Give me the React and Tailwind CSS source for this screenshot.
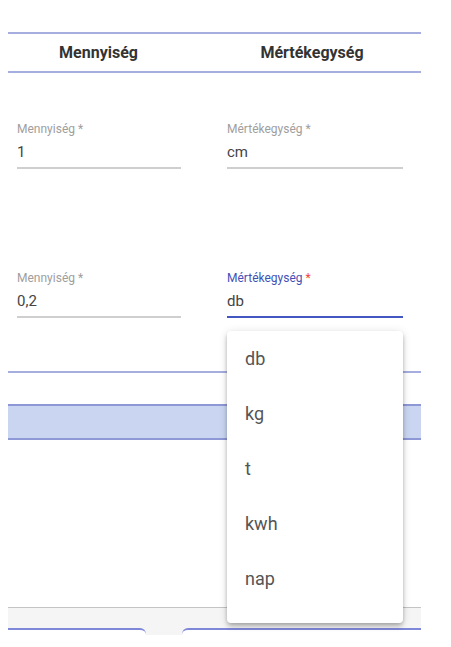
import React from 'react'

const units = ['db', 'kg', 't', 'kwh', 'nap']

const Field = ({ label, value, focused, className }) => (
	<div className={`flex flex-col ${className}`}>
		<div className={`h-[14px] text-[12px] leading-[14px] ${focused ? 'text-[#3f51b5]' : 'text-[#9e9e9e]'}`}>
			{label} <span className={focused ? 'text-[#f44336]' : ''}>*</span>
		</div>
		<div className='mt-[6px] h-[20px] text-[15px] leading-[20px] text-[#444]'>{value}</div>
		{focused ? (
			<div className='mt-[5px] h-[2px] bg-[#4356c2]'></div>
		) : (
			<div className='mt-[5px] h-[2px] bg-[#cfcfcf]'></div>
		)}
	</div>
)

const App = () => {
	return (
		<div className="relative w-[451px] h-[647px] overflow-hidden bg-white font-['Roboto',sans-serif]">
			<div className='w-[413px] ml-[8px] pt-[32px]'>
				{/* table header */}
				<div className='flex h-[41px] border-y-2 border-[#a6addf]'>
					<div className='w-[194px] flex items-center justify-center pr-[13px] text-[16px] font-bold text-[#333]'>Mennyiség</div>
					<div className='w-px bg-white'></div>
					<div className='flex-1 flex items-center justify-center text-[16px] font-bold text-[#333]'>Mértékegység</div>
				</div>

				{/* row 1 */}
				<div className='flex mt-[49px]'>
					<Field className='w-[164px] ml-[9px]' label='Mennyiség' value='1' />
					<Field className='w-[176px] ml-[46px]' label='Mértékegység' value='cm' />
				</div>

				{/* row 2 */}
				<div className='flex mt-[102px]'>
					<Field className='w-[164px] ml-[9px]' label='Mennyiség' value='0,2' />
					<Field className='w-[176px] ml-[46px]' label='Mértékegység' value='db' focused />
				</div>

				<div className='mt-[53px] h-[2px] bg-[#a6addf]'></div>
				<div className='mt-[31px] h-[36px] border-y-2 border-[#8e98d6] bg-[#cad6f1]'></div>

				{/* footer */}
				<div className='mt-[167px] h-[28px] border-t border-[#c4c4c4] bg-[#f5f5f5] pt-[20px]'>
					<div className='flex'>
						<div className='w-[138px] h-[30px] bg-white border-t-2 border-[#7f87d8] rounded-tr-[6px]'></div>
						<div className='flex-1 ml-[36px] h-[30px] bg-white border-t-2 border-[#7f87d8] rounded-tl-[6px]'></div>
					</div>
				</div>
			</div>

			{/* select menu */}
			<div className='absolute left-[227px] top-[331px] w-[176px] bg-white rounded-[4px] pb-[17px] shadow-[0_2px_4px_-1px_rgba(0,0,0,0.2),0_4px_5px_0_rgba(0,0,0,0.14),0_1px_10px_0_rgba(0,0,0,0.12)]'>
				{units.map((u) => (
					<div key={u} className='h-[55px] flex items-center pl-[18px] text-[18px] text-[#555]'>{u}</div>
				))}
			</div>
		</div>
	)
}

export default App
